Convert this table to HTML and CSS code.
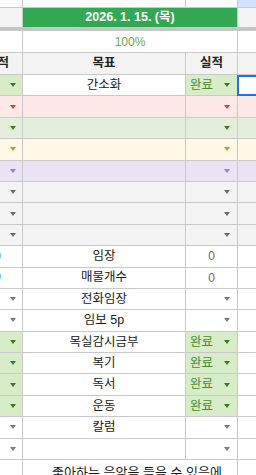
FILE: index.html
```html
<!DOCTYPE html>
<html lang="ko">
<head>
<meta charset="utf-8">
<link rel="stylesheet" href="styles.css">
</head>
<body>
<div class="sheet">
  <div class="row">
    <div class="c top"></div><div class="c top"></div><div class="c top"></div><div class="c top selcol"></div>
  </div>
  <div class="row">
    <div class="c gy"></div><div class="c date span2">2026. 1. 15. (목)</div><div class="c gy"></div>
  </div>
  <div class="band"></div>
  <div class="row">
    <div class="c"></div><div class="c pct span2">100%</div><div class="c"></div>
  </div>
  <div class="row head">
    <div class="c lcol"><div class="in ctr">실적</div></div><div class="c">목표</div><div class="c">실적</div><div class="c"></div>
  </div>

  <div class="row">
    <div class="c lcol ok"><div class="in"><span class="dd"></span></div></div>
    <div class="c">간소화</div>
    <div class="c v ok">완료<span class="dd"></span></div>
    <div class="c sel"><div class="selbox"></div></div>
  </div>
  <div class="row pk">
    <div class="c lcol"><div class="in"><span class="dd"></span></div></div>
    <div class="c"></div>
    <div class="c v"><span class="dd"></span></div>
    <div class="c"></div>
  </div>
  <div class="row gr">
    <div class="c lcol"><div class="in"><span class="dd"></span></div></div>
    <div class="c"></div>
    <div class="c v"><span class="dd"></span></div>
    <div class="c"></div>
  </div>
  <div class="row yl">
    <div class="c lcol"><div class="in"><span class="dd"></span></div></div>
    <div class="c"></div>
    <div class="c v"><span class="dd"></span></div>
    <div class="c"></div>
  </div>
  <div class="row pu">
    <div class="c lcol"><div class="in"><span class="dd"></span></div></div>
    <div class="c"></div>
    <div class="c v"><span class="dd"></span></div>
    <div class="c"></div>
  </div>
  <div class="row gy">
    <div class="c lcol"><div class="in"><span class="dd"></span></div></div>
    <div class="c"></div>
    <div class="c v"><span class="dd"></span></div>
    <div class="c"></div>
  </div>
  <div class="row gy">
    <div class="c lcol"><div class="in"><span class="dd"></span></div></div>
    <div class="c"></div>
    <div class="c v"><span class="dd"></span></div>
    <div class="c"></div>
  </div>
  <div class="row gy">
    <div class="c lcol"><div class="in"><span class="dd"></span></div></div>
    <div class="c"></div>
    <div class="c v"><span class="dd"></span></div>
    <div class="c"></div>
  </div>

  <div class="row">
    <div class="c lcol"><div class="in ctr ghost">0</div></div>
    <div class="c">임장</div>
    <div class="c num">0</div>
    <div class="c"></div>
  </div>
  <div class="row">
    <div class="c lcol"><div class="in ctr ghost">0</div></div>
    <div class="c">매물개수</div>
    <div class="c num">0</div>
    <div class="c"></div>
  </div>
  <div class="row">
    <div class="c lcol"><div class="in"><span class="dd"></span></div></div>
    <div class="c">전화임장</div>
    <div class="c v"><span class="dd"></span></div>
    <div class="c"></div>
  </div>
  <div class="row">
    <div class="c lcol"><div class="in"><span class="dd"></span></div></div>
    <div class="c">임보 5p</div>
    <div class="c v"><span class="dd"></span></div>
    <div class="c"></div>
  </div>
  <div class="row">
    <div class="c lcol ok"><div class="in"><span class="dd"></span></div></div>
    <div class="c">목실감시금부</div>
    <div class="c v ok">완료<span class="dd"></span></div>
    <div class="c"></div>
  </div>
  <div class="row">
    <div class="c lcol ok"><div class="in"><span class="dd"></span></div></div>
    <div class="c">복기</div>
    <div class="c v ok">완료<span class="dd"></span></div>
    <div class="c"></div>
  </div>
  <div class="row">
    <div class="c lcol ok"><div class="in"><span class="dd"></span></div></div>
    <div class="c">독서</div>
    <div class="c v ok">완료<span class="dd"></span></div>
    <div class="c"></div>
  </div>
  <div class="row">
    <div class="c lcol ok"><div class="in"><span class="dd"></span></div></div>
    <div class="c">운동</div>
    <div class="c v ok">완료<span class="dd"></span></div>
    <div class="c"></div>
  </div>
  <div class="row">
    <div class="c lcol"><div class="in"><span class="dd"></span></div></div>
    <div class="c">칼럼</div>
    <div class="c v"><span class="dd"></span></div>
    <div class="c"></div>
  </div>
  <div class="row">
    <div class="c lcol"><div class="in"><span class="dd"></span></div></div>
    <div class="c"></div>
    <div class="c v"><span class="dd"></span></div>
    <div class="c"></div>
  </div>
  <div class="row">
    <div class="c"></div>
    <div class="c note span2">좋아하는 음악을 들을 수 있음에</div>
    <div class="c"></div>
  </div>
</div>
</body>
</html>
```

FILE: styles.css
```css
html, body {
  margin: 0;
  padding: 0;
  background: #ffffff;
  overflow: hidden;
}

.sheet {
  display: grid;
  width: 256px;
  grid-template-columns: 22px 162px 51px 18px;
  grid-template-rows: 7px 19px 2px 21px 21px repeat(18, 20.4px) 30px;
  gap: 1px;
  background: #c9c9c9;
  font-family: "Liberation Sans", "Noto Sans CJK KR", sans-serif;
  font-size: 12.5px;
  line-height: 1;
  color: #1a1a1a;
}

.row { display: contents; }

.c {
  background: #ffffff;
  display: flex;
  align-items: center;
  justify-content: center;
  overflow: hidden;
  white-space: nowrap;
  min-width: 0;
  position: relative;
}

.span2 { grid-column: span 2; }

.band {
  grid-column: 1 / -1;
  background: #c4c4c4;
}

.top { background: #fcfcfc; }
.top.selcol { background: #d3e3fd; }

.date {
  background: #32a852;
  color: #ffffff;
  font-weight: bold;
}

.pct { color: #6aa84f; font-size: 12px; }

.head > .c {
  background: #f3f3f3;
  font-weight: bold;
  color: #222222;
}

/* 실적 cells */
.v {
  justify-content: flex-start;
  padding: 0 7px 0 4px;
}

.num { color: #6b6b6b; font-size: 12px; }

.lcol { justify-content: flex-start; }
.lcol > .in {
  flex: none;
  box-sizing: border-box;
  width: 51px;
  height: 100%;
  margin-left: -28px;
  display: flex;
  align-items: center;
  padding: 0 7px 0 4px;
}
.lcol > .in.ctr { justify-content: center; padding: 0; }
.ghost { color: #4a80dc; }

.dd {
  margin-left: auto;
  flex: none;
  width: 0;
  height: 0;
  border-left: 3.5px solid transparent;
  border-right: 3.5px solid transparent;
  border-top: 4px solid #7a7a7a;
}

.c.ok { background: #d7ecc9; color: #4b8a2c; }
.ok .dd { border-top-color: #3c7a23; }

.pk > .c { background: #fce8e6; }
.pk .dd { border-top-color: #e53935; }

.gr > .c { background: #e3efdb; }
.gr .dd { border-top-color: #3c7a23; }

.yl > .c { background: #fef8e4; }
.yl .dd { border-top-color: #c4952a; }

.pu > .c { background: #e8e4f6; }
.pu .dd { border-top-color: #8d7fd2; }

.gy > .c, .c.gy { background: #f3f3f3; }
.gy .dd { border-top-color: #6b6b6b; }

.sel { overflow: visible; z-index: 2; }
.selbox {
  position: absolute;
  top: 0;
  left: -1px;
  right: -4px;
  bottom: -1px;
  border: 2px solid #1a73e8;
}

.note {
  align-items: flex-start;
  justify-content: center;
  padding: 6px 0 0 14px;
  font-size: 13px;
}
```
